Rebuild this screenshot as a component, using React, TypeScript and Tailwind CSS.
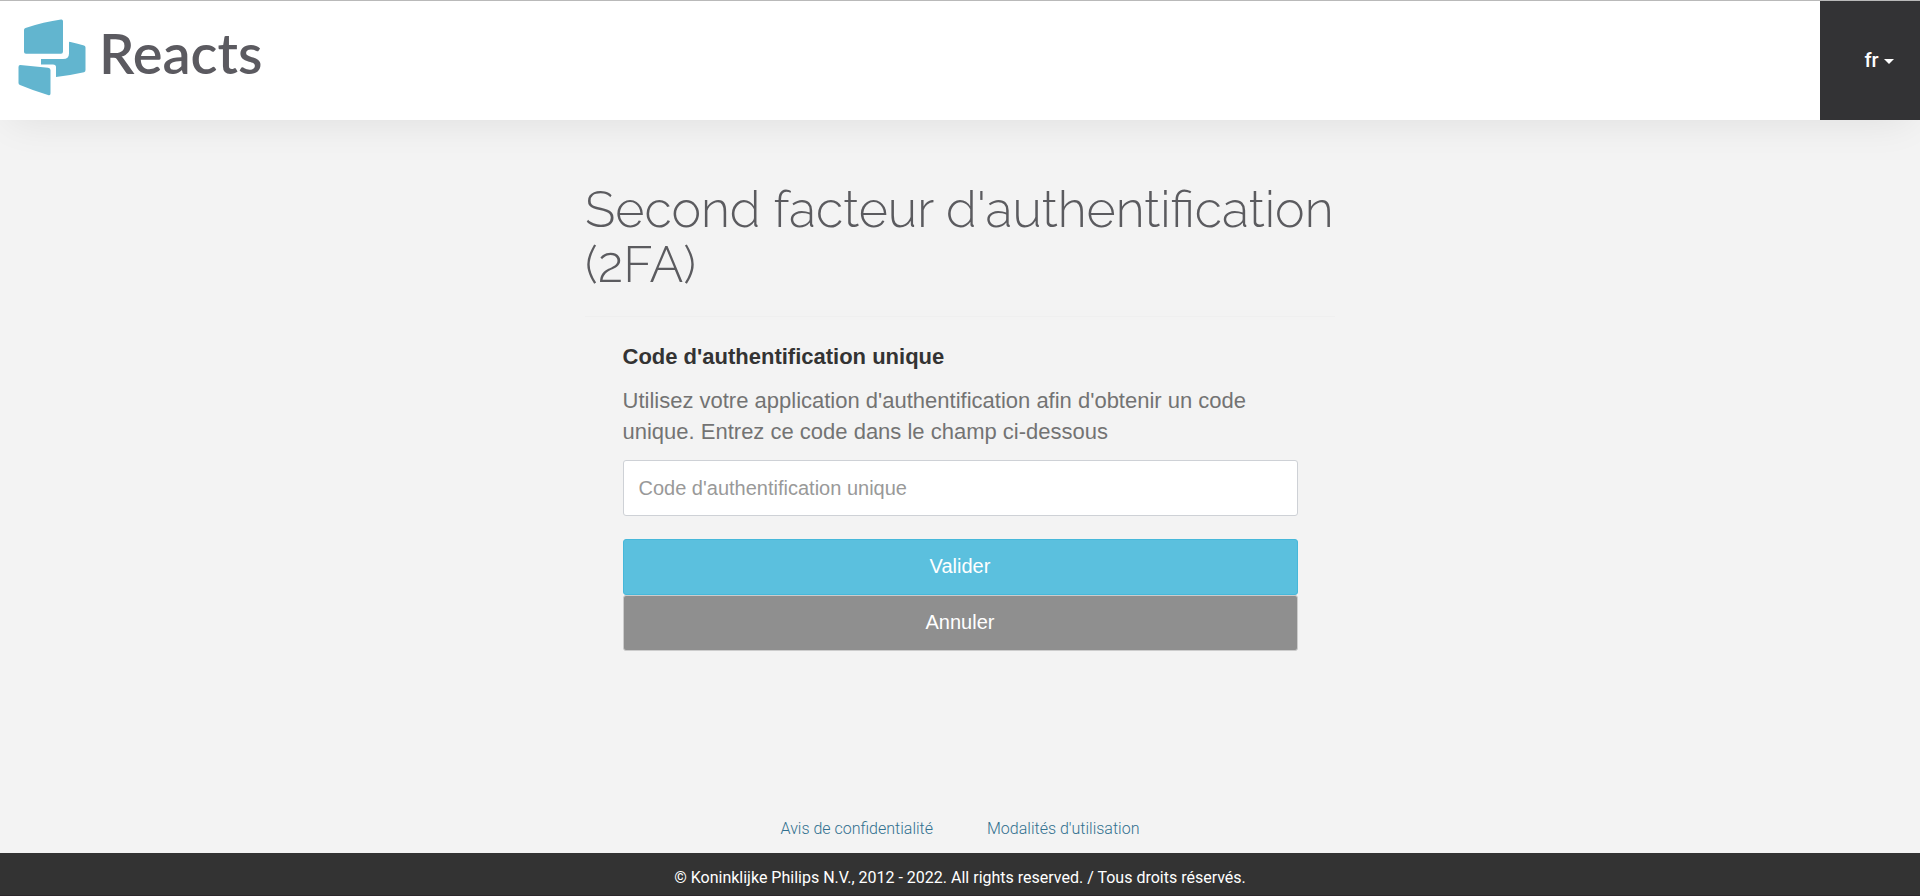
function Logo() {
  return (
    <a href="#" aria-label="Reacts" className="flex items-start gap-[13px] pl-[18px] text-[#5b5a60] no-underline">
      <svg viewBox="0 0 68 77" className="h-[77px] w-[68px]" fill="#62b5cf" aria-hidden="true">
        <path d="M7.5 9Q26 3 43 .6Q45 .3 45 2.200V32.500Q45 34.700 43 34.700H8Q6 34.700 6 33V11Q6 9.500 7.500 9Z" />
        <path d="M52.500 23Q60 24.500 66 26.500Q67.500 27 67.500 28.500V51Q67.500 53 66 53.300Q52 56.500 38 58V48Q38 45.500 35 45.500H23V40H45Q51 40 51 34.500V23.500Q51 22.500 52.500 23Z" />
        <path d="M2.200 46L30 48.700Q32.500 49 32.500 51V74.500Q32.500 77 30 76Q15 71.500 2 66Q.5 65.300 .5 64V48Q.5 46 2.200 46Z" />
      </svg>
      <span className="font-['Lato','Liberation_Sans',sans-serif] text-[56px] leading-[68px] font-semibold">Reacts</span>
    </a>
  );
}

export default function App() {
  return (
    <div className="flex min-h-screen flex-col bg-[#f3f3f3] font-['Liberation_Sans',Arial,sans-serif]">
      <header className="flex h-[120px] items-stretch justify-between border-t border-[#b9b9b9] bg-white shadow-[0_10px_40px_-10px_rgba(0,0,0,0.09)]">
        <div className="pt-[18px]">
          <Logo />
        </div>
        <button type="button" aria-haspopup="true" className="flex w-[100px] items-center justify-center gap-[5px] bg-[#333335] pb-0.5 pl-[18px] font-['Roboto',sans-serif] text-xl font-medium text-white">
          fr
          <svg viewBox="0 0 10 5" className="mt-1 h-[5px] w-[10px]" fill="currentColor" aria-hidden="true">
            <path d="M0 0H10L5 5Z" />
          </svg>
        </button>
      </header>

      <main className="mx-auto w-full max-w-[750px] grow pt-[62px]">
        <h1 className="border-b border-[#efefef] pb-6 font-['Raleway','Lato',sans-serif] text-[50px] leading-[55px] font-light text-[#5b5b5f]">
          Second facteur d'authentification (2FA)
        </h1>
        <form className="mx-auto flex w-[90%] flex-col pt-6" onSubmit={(e) => e.preventDefault()}>
          <label htmlFor="code" className="text-[22px] leading-[31px] font-bold text-[#333333]">
            Code d'authentification unique
          </label>
          <p id="code-help" className="mt-[13px] text-[22px] leading-[31px] text-[#737373]">
            Utilisez votre application d'authentification afin d'obtenir un code unique. Entrez ce code dans le champ
            ci-dessous
          </p>
          <input
            id="code"
            type="text"
            aria-describedby="code-help"
            placeholder="Code d'authentification unique"
            className="mt-[13px] h-14 rounded-[3px] border border-[#ced1d6] bg-white px-[15px] text-xl text-[#555555] placeholder:text-[#999999]"
          />
          <button type="submit" className="mt-[23px] h-14 rounded-[3px] border border-[#46b8da] bg-[#5bc0de] pb-0.5 text-xl text-white">
            Valider
          </button>
          <button type="button" className="h-14 rounded-[3px] border border-[#cccccc] bg-[#8f8f8f] pb-0.5 text-xl text-white">
            Annuler
          </button>
        </form>
      </main>

      <footer className="text-center font-['Roboto',sans-serif] text-base">
        <nav className="flex justify-center gap-[54px] pb-[11px] leading-[26px] font-light text-[#31708f]">
          <a href="#">Avis de confidentialité</a>
          <a href="#">Modalités d'utilisation</a>
        </nav>
        <p className="h-[43px] border-b border-[#2c272b] bg-[#333333] pt-[13px] leading-6 text-white">
          © Koninklijke Philips N.V., 2012 - 2022. All rights reserved. / Tous droits réservés.
        </p>
      </footer>
    </div>
  );
}
